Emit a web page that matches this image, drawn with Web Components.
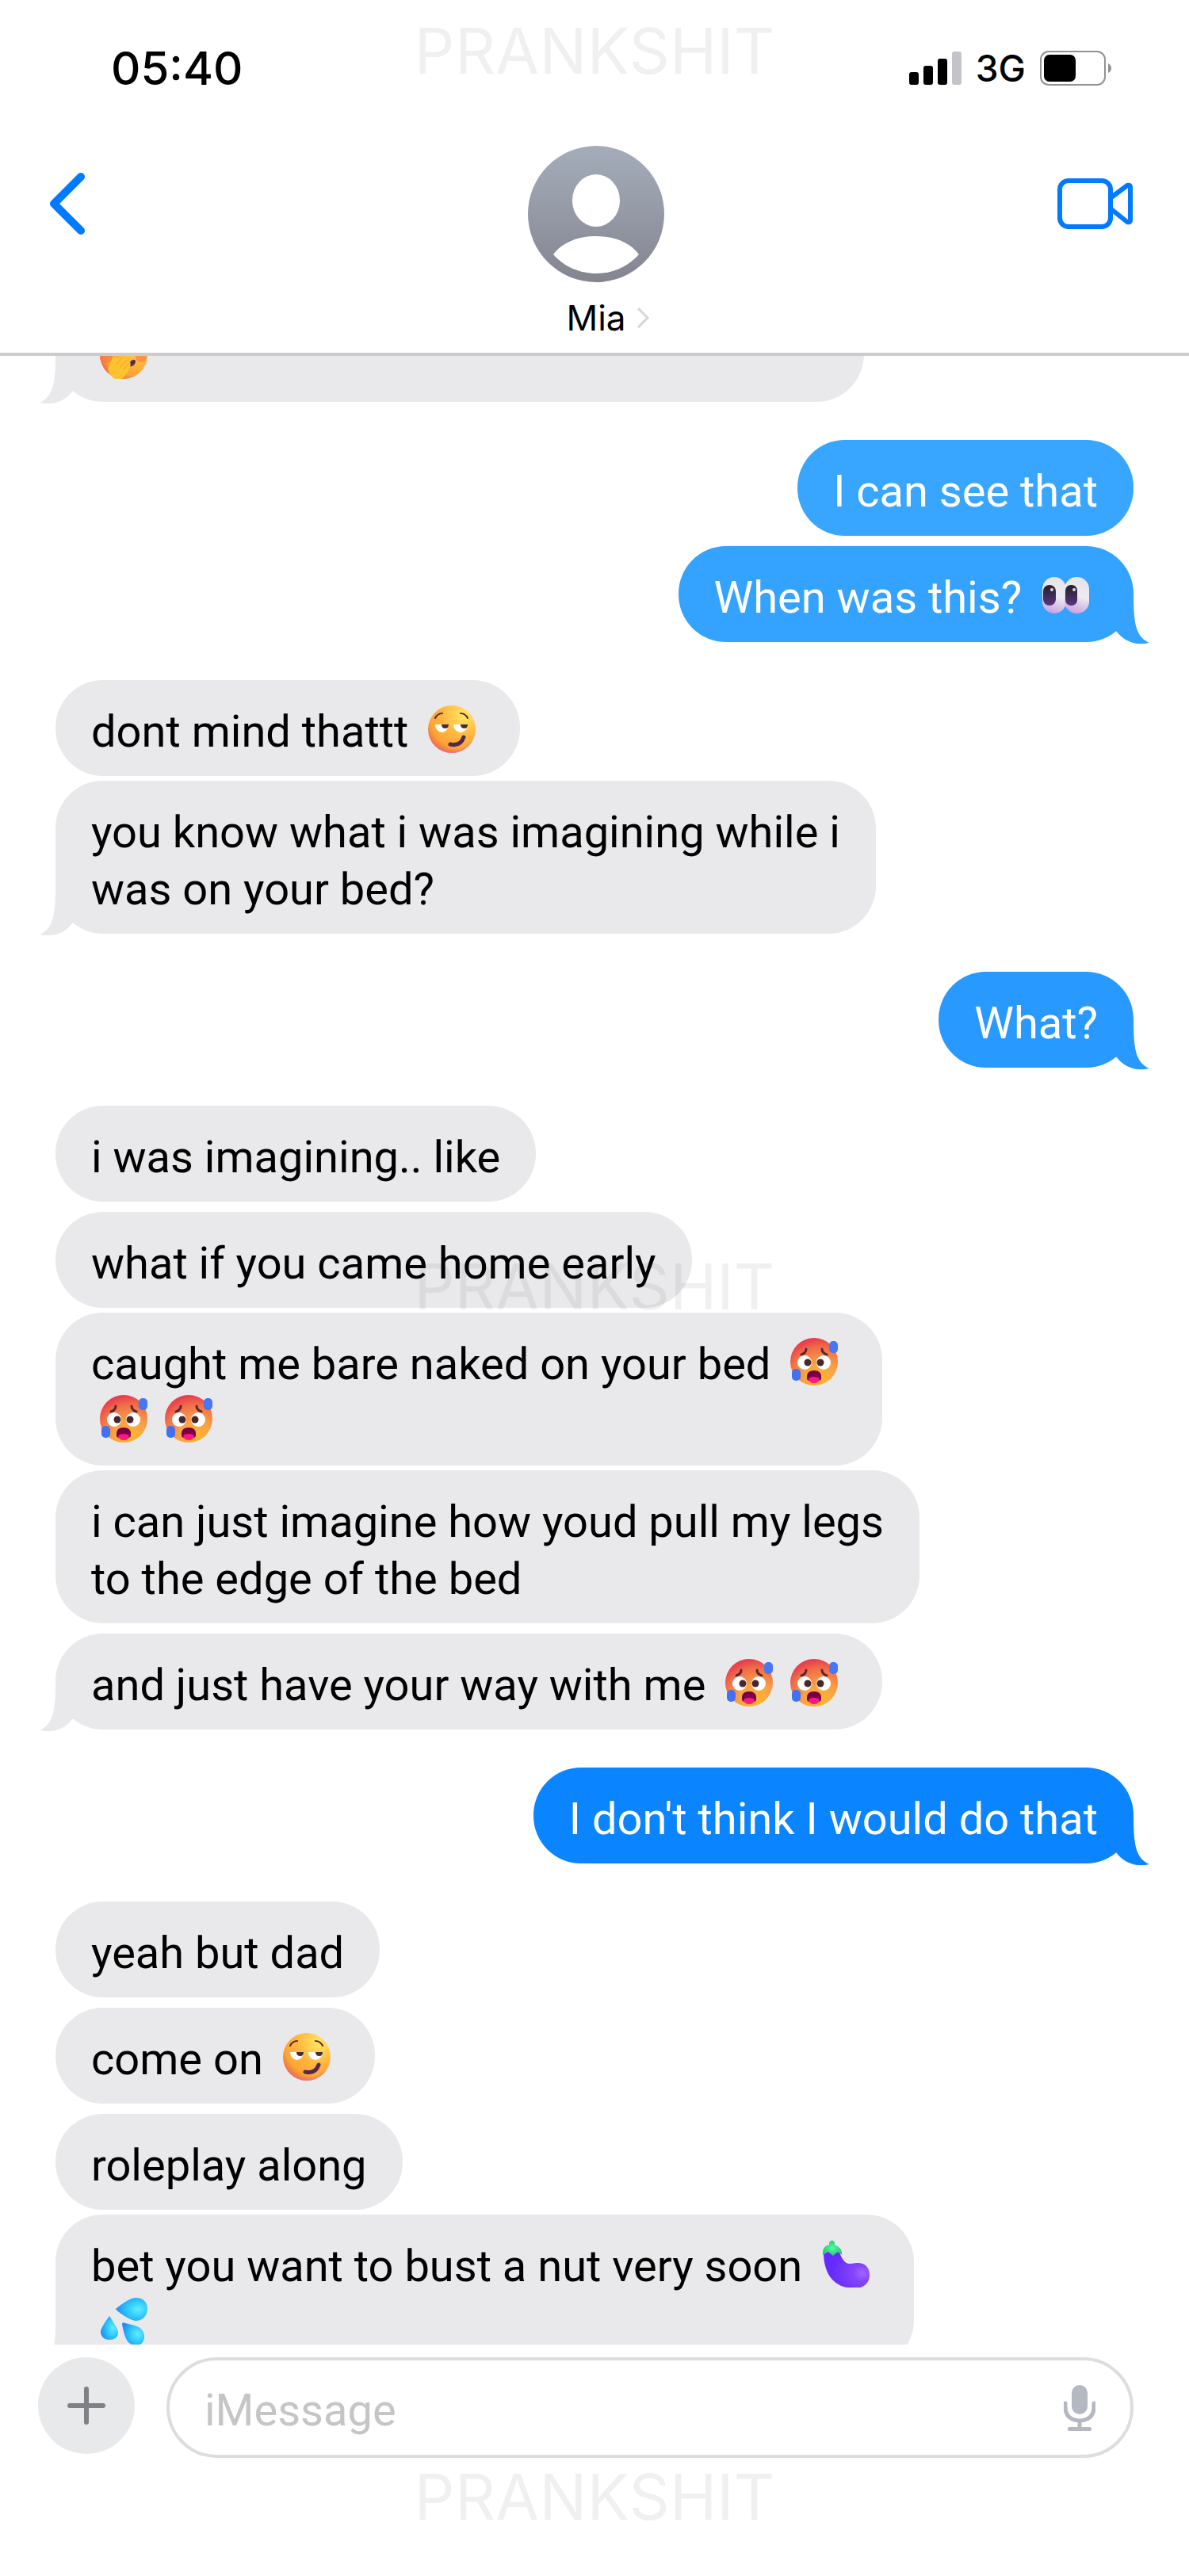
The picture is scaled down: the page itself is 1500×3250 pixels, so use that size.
<!DOCTYPE html>
<html lang="en">
<head>
<meta charset="utf-8">
<meta name="viewport" content="width=device-width, initial-scale=1">
<title>Messages</title>
<style>
    body {
        margin: 0;
        background: #fff;
        color: #000;
        font-family: Inter, "Liberation Sans", sans-serif;
        font-size: 58px;
        line-height: 72px;
    }
</style>
</head>
<body>

<chat-app>
    <status-bar slot="header" time="05:40" network="3G"></status-bar>
    <chat-header slot="header" name="Mia"></chat-header>

    <chat-message class="cropped" tail><emoji-icon name="giggle"></emoji-icon></chat-message>

    <chat-message class="turn" from="me" style="--bubble: #38a5ff">I can see that</chat-message>
    <chat-message from="me" tail style="--bubble: #34a3ff">When was this? <emoji-icon name="eyes"></emoji-icon></chat-message>

    <chat-message class="turn">dont mind thattt <emoji-icon name="smirk"></emoji-icon></chat-message>
    <chat-message class="long" tail>you know what i was imagining while i<br>was on your bed?</chat-message>

    <chat-message class="turn" from="me" tail style="--bubble: #2899ff">What?</chat-message>

    <chat-message class="turn">i was imagining.. like</chat-message>
    <chat-message>what if you came home early</chat-message>
    <chat-message class="long">caught me bare naked on your bed <emoji-icon name="hot"></emoji-icon><br><emoji-icon name="hot"></emoji-icon><emoji-icon name="hot"></emoji-icon></chat-message>
    <chat-message class="long">i can just imagine how youd pull my legs<br>to the edge of the bed</chat-message>
    <chat-message tail>and just have your way with me <emoji-icon name="hot"></emoji-icon><emoji-icon name="hot"></emoji-icon></chat-message>

    <chat-message class="turn" from="me" tail style="--bubble: #0b84ff">I don't think I would do that</chat-message>

    <chat-message class="turn">yeah but dad</chat-message>
    <chat-message>come on <emoji-icon name="smirk"></emoji-icon></chat-message>
    <chat-message>roleplay along</chat-message>
    <chat-message class="long" tail>bet you want to bust a nut very soon <emoji-icon name="eggplant"></emoji-icon><br><emoji-icon name="drops"></emoji-icon></chat-message>

    <chat-composer slot="footer"></chat-composer>
</chat-app>

<script>
const emojis = {
    smirk: {
        label: "smirking face",
        art: `
            <circle cx="30" cy="30" r="30" fill="url(#face)"/>
            <circle cx="30" cy="30" r="30" fill="url(#blush)"/>
            <path d="M9 16q3-6 9-6M41 10q6 0 9 6" fill="none" stroke="#4b2b42" stroke-width="2" stroke-linecap="round"/>
            <path d="M9 24h17a8.500 10 0 0 1-17 0zM32 24h18a9 10 0 0 1-18 0z" fill="#fff"/>
            <path d="M17 24h9q0 5-4 5-5 0-5-5zM41 24h9q0 5-4 5-5 0-5-5z" fill="#4b2b35"/>
            <path d="M28 49q13 3 17-9" fill="none" stroke="#55264f" stroke-width="5" stroke-linecap="round"/>`
    },
    hot: {
        label: "hot face",
        art: `
            <circle cx="30" cy="30" r="30" fill="url(#heat)"/>
            <path d="M14 21q6-2 6-7M46 21q-6-2-6-7" fill="none" stroke="#5c2434" stroke-width="3" stroke-linecap="round"/>
            <circle cx="18" cy="31" r="9" fill="#fff"/>
            <circle cx="42" cy="31" r="9" fill="#fff"/>
            <circle cx="22" cy="31" r="4.500" fill="#472630"/>
            <circle cx="38" cy="31" r="4.500" fill="#472630"/>
            <path d="M21 49q0-8 9-8t9 8v2q0 3-4 3H25q-4 0-4-3z" fill="#790048"/>
            <path d="M23 51q7-4 14 0-1 6-7 6t-7-6z" fill="#ff1684"/>
            <rect x="49" y="4" width="11" height="15" rx="5" fill="#4776f6"/>
            <rect x="2" y="39" width="11" height="15" rx="5" fill="#4270f2"/>`
    },
    eyes: {
        label: "eyes",
        art: `
            <rect x="1" y="7" width="30" height="46" rx="15" fill="url(#ball)"/>
            <rect x="29" y="7" width="31" height="46" rx="15" fill="url(#ball)"/>
            <rect x="2" y="17" width="16" height="26" rx="8" fill="url(#pupil)"/>
            <rect x="30" y="17" width="15" height="26" rx="7" fill="url(#pupil)"/>
            <circle cx="13" cy="23" r="2" fill="#ddd"/>
            <circle cx="41" cy="23" r="2" fill="#ddd"/>`
    },
    giggle: {
        label: "face with hand over mouth",
        art: `
            <circle cx="30" cy="30" r="30" fill="url(#face)"/>
            <circle cx="8" cy="32" r="8" fill="#f4694c" opacity=".5"/>
            <circle cx="52" cy="32" r="7" fill="#f4694c" opacity=".5"/>
            <ellipse cx="41" cy="40" rx="3" ry="5" transform="rotate(40 41 40)" fill="#503050"/>
            <path d="M10 47L15 35q3-4 6-1l8-2q4 0 5 3l3 3q3 3 1 6l-3 8-7 8H19q-7-4-9-13z" fill="#ffc22f"/>
            <path d="M21 42l7-9M26 45l8-9M30 48l7-8" fill="none" stroke="#ee9b28" stroke-width="1"/>`
    },
    eggplant: {
        label: "eggplant",
        art: `
            <path d="M2 16q10-5 20 0c3 7 6 13 12 14q5 0 9-1c10-1 17 5 17 15 0 11-8 17-19 17C13 61 2 40 2 16z" fill="url(#plum)"/>
            <path d="M1 19Q0 8 9 6V3q4-5 7 0v3q10 4 9 13l-5-4-6 5-6-5z" fill="url(#leaf)"/>`
    },
    drops: {
        label: "sweat droplets",
        art: `
            <path d="M20 15Q37 1 45 1c10 0 15 6 15 14 0 9-7 15-15 15-8-1-24-12-25-15z" fill="url(#water)"/>
            <path d="M12 24q11 16 11 21c0 6-5 9-11 9S1 50 1 44q0-5 11-20z" fill="url(#water)"/>
            <path d="M28 34q0-3 4-1l12 3c11 3 14 12 11 19-2 7-13 8-18 3-5-3-8-18-9-24z" fill="url(#water)"/>`
    }
};

class EmojiIcon extends HTMLElement {

    constructor() {
        super();
        this.shadowDOM = this.attachShadow({mode: "open"});
    }

    connectedCallback() {
        const emoji = emojis[this.getAttribute("name")];
        this.shadowDOM.innerHTML = `
            <style>
                :host {
                    display: inline-block;
                    width: 60px;
                    height: 60px;
                    margin: 0 11px;
                    vertical-align: -8px;
                }

                svg {
                    display: block;
                }
            </style>
            <svg width="60" height="60" viewBox="0 0 60 60" role="img" aria-label="${emoji.label}">
                <defs>
                    <radialGradient id="face" cx=".75" cy=".2" r=".9">
                        <stop offset="0" stop-color="#ffe760"/>
                        <stop offset=".5" stop-color="#ffb63f"/>
                        <stop offset=".8" stop-color="#fca534"/>
                        <stop offset="1" stop-color="#e96b49"/>
                    </radialGradient>
                    <radialGradient id="blush" cx=".5" cy=".4" r=".65">
                        <stop offset=".8" stop-color="#ee6a90" stop-opacity="0"/>
                        <stop offset="1" stop-color="#ee5fae"/>
                    </radialGradient>
                    <radialGradient id="heat" cx=".65" cy=".9" r=".95">
                        <stop offset="0" stop-color="#fdb52c"/>
                        <stop offset=".4" stop-color="#f8a245"/>
                        <stop offset=".75" stop-color="#f06b48"/>
                        <stop offset="1" stop-color="#e5304f"/>
                    </radialGradient>
                    <linearGradient id="ball" x1=".6" x2=".4" y2="1">
                        <stop offset="0" stop-color="#e5e2e8"/>
                        <stop offset=".5" stop-color="#eeebf1"/>
                        <stop offset="1" stop-color="#c8a1dd"/>
                    </linearGradient>
                    <linearGradient id="pupil" x2="0" y2="1">
                        <stop offset="0" stop-color="#242029"/>
                        <stop offset="1" stop-color="#593581"/>
                    </linearGradient>
                    <radialGradient id="plum" cx=".85" cy=".6" r=".7">
                        <stop offset="0" stop-color="#a066ff"/>
                        <stop offset=".3" stop-color="#8445f8"/>
                        <stop offset="1" stop-color="#632aff"/>
                    </radialGradient>
                    <radialGradient id="leaf">
                        <stop offset="0" stop-color="#4aff9f"/>
                        <stop offset="1" stop-color="#31c67c"/>
                    </radialGradient>
                    <radialGradient id="water" cx=".7" cy=".5" r=".7">
                        <stop offset="0" stop-color="#65eaff"/>
                        <stop offset=".5" stop-color="#2cc8fb"/>
                        <stop offset="1" stop-color="#238bfa"/>
                    </radialGradient>
                </defs>
                ${emoji.art}
            </svg>`;
    }
}

customElements.define("emoji-icon", EmojiIcon);

class ChatMessage extends HTMLElement {

    constructor() {
        super();
        this.shadowDOM = this.attachShadow({mode: "open"});
    }

    connectedCallback() {
        const tail = `
            <svg class="tail" width="50" height="70" viewBox="0 0 50 70" aria-hidden="true">
                <path d="M30 4C30 42 32 60 50 68C32 72 18 66 8 53L0 20Z"/>
            </svg>`;

        this.shadowDOM.innerHTML = `
            <style>
                * {
                    box-sizing: border-box;
                }

                :host {
                    display: flex;
                    flex-shrink: 0;
                    font-family: Roboto, "Liberation Sans", sans-serif;
                    font-size: 56px;
                    --fill: var(--bubble, #e9e9eb);
                }

                :host([from="me"]) {
                    justify-content: flex-end;
                    color: #fff;
                }

                .bubble {
                    position: relative;
                    min-width: var(--min-width, 0);
                    max-width: 86%;
                    margin: 0;
                    padding: 29px 45px 20px;
                    border-radius: 60px;
                    background: var(--fill);
                }

                .tail {
                    position: absolute;
                    right: -20px;
                    bottom: -3px;
                    fill: var(--fill);
                }

                :host(:not([from="me"])) .tail {
                    right: auto;
                    left: -20px;
                    transform: scaleX(-1);
                }
            </style>
            <p class="bubble"><slot></slot>${this.hasAttribute("tail") ? tail : ""}</p>`;
    }
}

customElements.define("chat-message", ChatMessage);

class StatusBar extends HTMLElement {

    constructor() {
        super();
        this.shadowDOM = this.attachShadow({mode: "open"});
    }

    connectedCallback() {
        this.shadowDOM.innerHTML = `
            <style>
                :host {
                    display: flex;
                    justify-content: space-between;
                    align-items: center;
                    padding: 50px 98px 0 140px;
                    font-weight: 500;
                }

                .signals {
                    display: flex;
                    align-items: center;
                    gap: 18px;
                    font-size: 46px;
                }

                svg {
                    display: block;
                }
            </style>
            <time>${this.getAttribute("time")}</time>
            <div class="signals">
                <svg width="66" height="42" viewBox="0 0 66 42" role="img" aria-label="Signal">
                    <rect y="26" width="12" height="16" rx="3"/>
                    <rect x="18" y="18" width="12" height="24" rx="3"/>
                    <rect x="36" y="9" width="12" height="33" rx="3"/>
                    <rect x="54" width="12" height="42" rx="3" fill="#c4c3c9"/>
                </svg>
                <span>${this.getAttribute("network")}</span>
                <svg width="90" height="44" viewBox="0 0 90 44" role="img" aria-label="Battery">
                    <rect x="1" y="1" width="81" height="42" rx="10" fill="none" stroke="#929292" stroke-width="2"/>
                    <rect x="5" y="5" width="40" height="34" rx="7"/>
                    <path d="M86 16q4 2 4 6t-4 6z" fill="#929292"/>
                </svg>
            </div>`;
    }
}

customElements.define("status-bar", StatusBar);

class ChatHeader extends HTMLElement {

    constructor() {
        super();
        this.shadowDOM = this.attachShadow({mode: "open"});
    }

    connectedCallback() {
        this.shadowDOM.innerHTML = `
            <style>
                :host {
                    display: grid;
                    grid-template-columns: 1fr auto 1fr;
                    align-items: start;
                    padding: 62px 58px 14px 62px;
                    border-bottom: 4px solid #ccc;
                }

                button {
                    display: flex;
                    align-items: center;
                    height: 146px;
                    padding: 0;
                    border: 0;
                    background: none;
                }

                .video {
                    justify-self: end;
                    padding-right: 13px;
                }

                svg {
                    display: block;
                }

                .avatar {
                    margin: 0 auto;
                }

                .name {
                    display: grid;
                    grid-template-columns: 1fr auto 1fr;
                    align-items: center;
                    margin-top: 15px;
                    font-size: 44px;
                    line-height: 60px;
                }

                h1 {
                    grid-column: 2;
                    margin: 0;
                    font: inherit;
                }

                .name svg {
                    margin-left: 14px;
                }
            </style>
            <button type="button" aria-label="Back">
                <svg width="45" height="78" viewBox="0 0 45 78" fill="none" stroke="#007aff" stroke-width="10" stroke-linecap="round" stroke-linejoin="round">
                    <path d="M40 5L6 39l34 34"/>
                </svg>
            </button>
            <div>
                <svg class="avatar" width="172" height="172" viewBox="0 0 172 172" aria-hidden="true">
                    <defs>
                        <linearGradient id="shade" x2="0" y2="1">
                            <stop offset="0" stop-color="#a5adba"/>
                            <stop offset="1" stop-color="#838590"/>
                        </linearGradient>
                    </defs>
                    <circle cx="86" cy="86" r="86" fill="url(#shade)"/>
                    <ellipse cx="86" cy="69" rx="30" ry="33" fill="#fff"/>
                    <path d="M32 137C43 122 63 114 86 114s43 8 54 23c-13 15-33 24-54 24s-41-9-54-24z" fill="#fff"/>
                </svg>
                <div class="name">
                    <h1>${this.getAttribute("name")}</h1>
                    <svg width="15" height="26" viewBox="0 0 15 26" fill="none" stroke="#d5d5d7" stroke-width="3">
                        <path d="M1 1l12 12L1 25"/>
                    </svg>
                </div>
            </div>
            <button type="button" class="video" aria-label="Video call">
                <svg width="95" height="64" viewBox="0 0 95 64" fill="none" stroke="#007aff" stroke-width="6" stroke-linejoin="round">
                    <rect x="3" y="3" width="64" height="58" rx="11"/>
                    <path d="M68 24L88 9q4-1 4 2v42q0 3-4 2L68 39"/>
                </svg>
            </button>`;
    }
}

customElements.define("chat-header", ChatHeader);

class ChatComposer extends HTMLElement {

    constructor() {
        super();
        this.shadowDOM = this.attachShadow({mode: "open"});
    }

    connectedCallback() {
        this.shadowDOM.innerHTML = `
            <style>
                * {
                    box-sizing: border-box;
                }

                :host {
                    display: flex;
                    align-items: flex-start;
                    gap: 40px;
                    padding: 16px 70px 149px 48px;
                    font-family: Roboto, "Liberation Sans", sans-serif;
                    font-size: 56px;
                }

                button {
                    display: flex;
                    align-items: center;
                    justify-content: center;
                    flex-shrink: 0;
                    padding: 0;
                    border: 0;
                    background: none;
                }

                .add {
                    width: 122px;
                    height: 122px;
                    border-radius: 50%;
                    background: #e8e9eb;
                }

                .field {
                    display: flex;
                    align-items: center;
                    flex: 1;
                    min-width: 0;
                    height: 127px;
                    padding: 0 44px;
                    border: 4px solid #ddd;
                    border-radius: 64px;
                }

                input {
                    flex: 1;
                    min-width: 0;
                    padding: 6px 0 0;
                    border: 0;
                    outline: 0;
                    background: none;
                    font: inherit;
                }

                input::placeholder {
                    color: #c5c5c7;
                    opacity: 1;
                }
            </style>
            <button type="button" class="add" aria-label="Add">
                <svg width="48" height="48" viewBox="0 0 48 48" stroke="#808184" stroke-width="6" stroke-linecap="round">
                    <path d="M24 3v42M3 24h42"/>
                </svg>
            </button>
            <div class="field">
                <input type="text" placeholder="iMessage" aria-label="iMessage">
                <button type="button" aria-label="Dictate">
                    <svg width="40" height="58" viewBox="0 0 40 58">
                        <rect x="10" width="20" height="37" rx="10" fill="#b4b8c1"/>
                        <path d="M2 23v5q0 16 18 17 18-1 18-17v-5M20 45v10" fill="none" stroke="#b4b8c1" stroke-width="5" stroke-linecap="round"/>
                        <rect x="5" y="53" width="30" height="5" rx="2" fill="#b4b8c1"/>
                    </svg>
                </button>
            </div>`;
    }
}

customElements.define("chat-composer", ChatComposer);

class ChatApp extends HTMLElement {

    constructor() {
        super();
        this.shadowDOM = this.attachShadow({mode: "open"});
    }

    connectedCallback() {
        this.shadowDOM.innerHTML = `
            <style>
                :host {
                    position: relative;
                    display: flex;
                    flex-direction: column;
                    height: 100vh;
                    overflow: hidden;
                }

                main {
                    display: flex;
                    flex-direction: column;
                    flex: 1;
                    min-height: 0;
                    padding: 0 70px;
                    overflow: hidden;
                }

                ::slotted(chat-message) {
                    margin-top: 13px;
                }

                ::slotted(.long) {
                    margin-top: 6px;
                }

                ::slotted(.turn) {
                    margin-top: 48px;
                }

                /* scrolled half way under the header */
                ::slotted(.cropped) {
                    margin-top: -63px;
                    --min-width: 75%;
                }

                .watermark {
                    position: absolute;
                    left: 0;
                    right: 0;
                    color: rgba(0, 0, 0, 0.06);
                    font-size: 80px;
                    font-weight: 400;
                    line-height: 80px;
                    text-align: center;
                    pointer-events: none;
                }

                .top {
                    top: 24px;
                }

                .middle {
                    top: 50%;
                    margin-top: -42px;
                }

                .bottom {
                    bottom: 60px;
                }
            </style>
            <header><slot name="header"></slot></header>
            <main><slot></slot></main>
            <footer><slot name="footer"></slot></footer>
            <div class="watermark top">PRANKSHIT</div>
            <div class="watermark middle">PRANKSHIT</div>
            <div class="watermark bottom">PRANKSHIT</div>`;
    }
}

customElements.define("chat-app", ChatApp);
</script>
</body>
</html>
